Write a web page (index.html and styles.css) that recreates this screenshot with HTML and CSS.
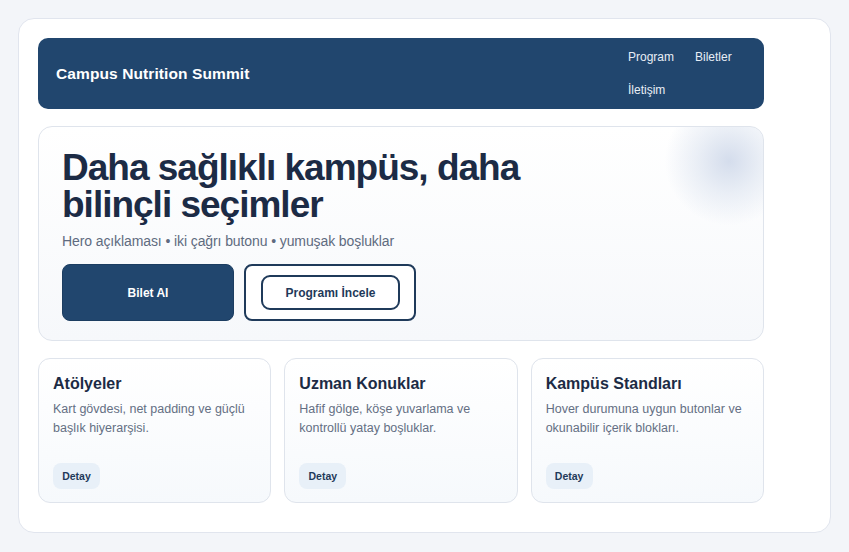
FILE: index.html
```html
<!DOCTYPE html>
<html lang="tr">
<head>
<meta charset="utf-8">
<title>Campus Nutrition Summit</title>
<link rel="stylesheet" href="styles.css">
</head>
<body>
<div class="shell">
  <div class="inner">
    <header class="topbar">
      <div class="brand">Campus Nutrition Summit</div>
      <nav class="nav">
        <a href="#">Program</a>
        <a href="#">Biletler</a>
        <a href="#">İletişim</a>
      </nav>
    </header>
    <section class="hero">
      <div class="blob"></div>
      <h1 class="hero-title">Daha sağlıklı kampüs, daha bilinçli seçimler</h1>
      <p class="hero-sub">Hero açıklaması • iki çağrı butonu • yumuşak boşluklar</p>
      <div class="actions">
        <a class="btn btn-primary" href="#">Bilet Al</a>
        <a class="btn btn-outline" href="#"><span class="btn-inner">Programı İncele</span></a>
      </div>
    </section>
    <section class="cards">
      <article class="card">
        <h2 class="card-title">Atölyeler</h2>
        <p class="card-text">Kart gövdesi, net padding ve güçlü başlık hiyerarşisi.</p>
        <a class="chip" href="#">Detay</a>
      </article>
      <article class="card">
        <h2 class="card-title">Uzman Konuklar</h2>
        <p class="card-text">Hafif gölge, köşe yuvarlama ve kontrollü yatay boşluklar.</p>
        <a class="chip" href="#">Detay</a>
      </article>
      <article class="card">
        <h2 class="card-title">Kampüs Standları</h2>
        <p class="card-text">Hover durumuna uygun butonlar ve okunabilir içerik blokları.</p>
        <a class="chip" href="#">Detay</a>
      </article>
    </section>
  </div>
</div>
</body>
</html>
```

FILE: styles.css
```css
* { box-sizing: border-box; }
html, body { margin: 0; padding: 0; }
body {
  background: #f3f5f9;
  font-family: "Liberation Sans", Arial, sans-serif;
  color: #1c2b45;
  padding: 18px 18px 19px 18px;
}
.shell {
  background: #ffffff;
  border: 1px solid #e1e5ee;
  border-radius: 16px;
  padding: 19px 19px 30px 19px;
  height: 515px;
}
.inner {
  width: 726px;
  display: flex;
  flex-direction: column;
  gap: 17px;
}
.topbar {
  background: #21466e;
  border-radius: 10px;
  height: 71px;
  padding: 0 18px;
  display: flex;
  align-items: center;
  justify-content: space-between;
}
.brand {
  color: #ffffff;
  font-weight: 700;
  font-size: 15.5px;
  letter-spacing: 0.1px;
}
.nav {
  width: 118px;
  display: flex;
  flex-wrap: wrap;
  column-gap: 21px;
}
.nav a {
  color: #e8eef6;
  text-decoration: none;
  font-size: 12px;
  line-height: 17px;
  padding: 8px 0;
}
.hero {
  position: relative;
  overflow: hidden;
  border: 1px solid #dfe4ec;
  border-radius: 14px;
  background: linear-gradient(180deg, #ffffff 0%, #f6f8fb 100%);
  padding: 22px 23px 19px 23px;
  height: 215px;
}
.blob {
  position: absolute;
  right: -31px;
  top: -31px;
  width: 130px;
  height: 130px;
  border-radius: 50%;
  background: radial-gradient(circle at 50% 50%, rgba(205, 215, 233, 0.85) 0%, rgba(218, 226, 239, 0.55) 35%, rgba(255, 255, 255, 0) 70%);
}
.hero-title {
  position: relative;
  margin: 0;
  font-size: 37px;
  line-height: 37px;
  font-weight: 700;
  letter-spacing: -1px;
  max-width: 500px;
  color: #1c2b45;
}
.hero-sub {
  margin: 9px 0 0 0;
  font-size: 14px;
  letter-spacing: -0.1px;
  color: #5f6b80;
  line-height: 18px;
}
.actions {
  display: flex;
  gap: 10px;
  margin-top: 14px;
}
.btn {
  width: 172px;
  height: 57px;
  border-radius: 8px;
  display: flex;
  align-items: center;
  justify-content: center;
  font-weight: 700;
  font-size: 12px;
  text-decoration: none;
}
.btn-primary {
  background: #21466e;
  color: #ffffff;
  border: 1px solid #1c3d61;
}
.btn-outline {
  background: #ffffff;
  border: 2px solid #1f3a5a;
  color: #1f3a5a;
}
.btn-inner {
  width: 139px;
  height: 35px;
  border: 2px solid #1f3a5a;
  border-radius: 9px;
  display: flex;
  align-items: center;
  justify-content: center;
  margin-left: 1px;
}
.cards {
  display: grid;
  grid-template-columns: repeat(3, 1fr);
  gap: 13px;
}
.card {
  border: 1px solid #dfe4ec;
  border-radius: 12px;
  background: linear-gradient(180deg, #ffffff 0%, #f6f9fc 100%);
  padding: 15px 14px 13px 14px;
  height: 145px;
  display: flex;
  flex-direction: column;
  align-items: flex-start;
}
.card-title {
  margin: 0;
  font-size: 16px;
  line-height: 20px;
  font-weight: 700;
  color: #1c2b45;
}
.card-text {
  margin: 6px 0 0 0;
  font-size: 12.5px;
  line-height: 19px;
  color: #646f83;
}
.chip {
  margin-top: auto;
  background: #e8f0f8;
  color: #1f3a5a;
  border-radius: 8px;
  font-weight: 700;
  font-size: 10.5px;
  text-decoration: none;
  width: 47px;
  height: 26px;
  display: flex;
  align-items: center;
  justify-content: center;
}
```
